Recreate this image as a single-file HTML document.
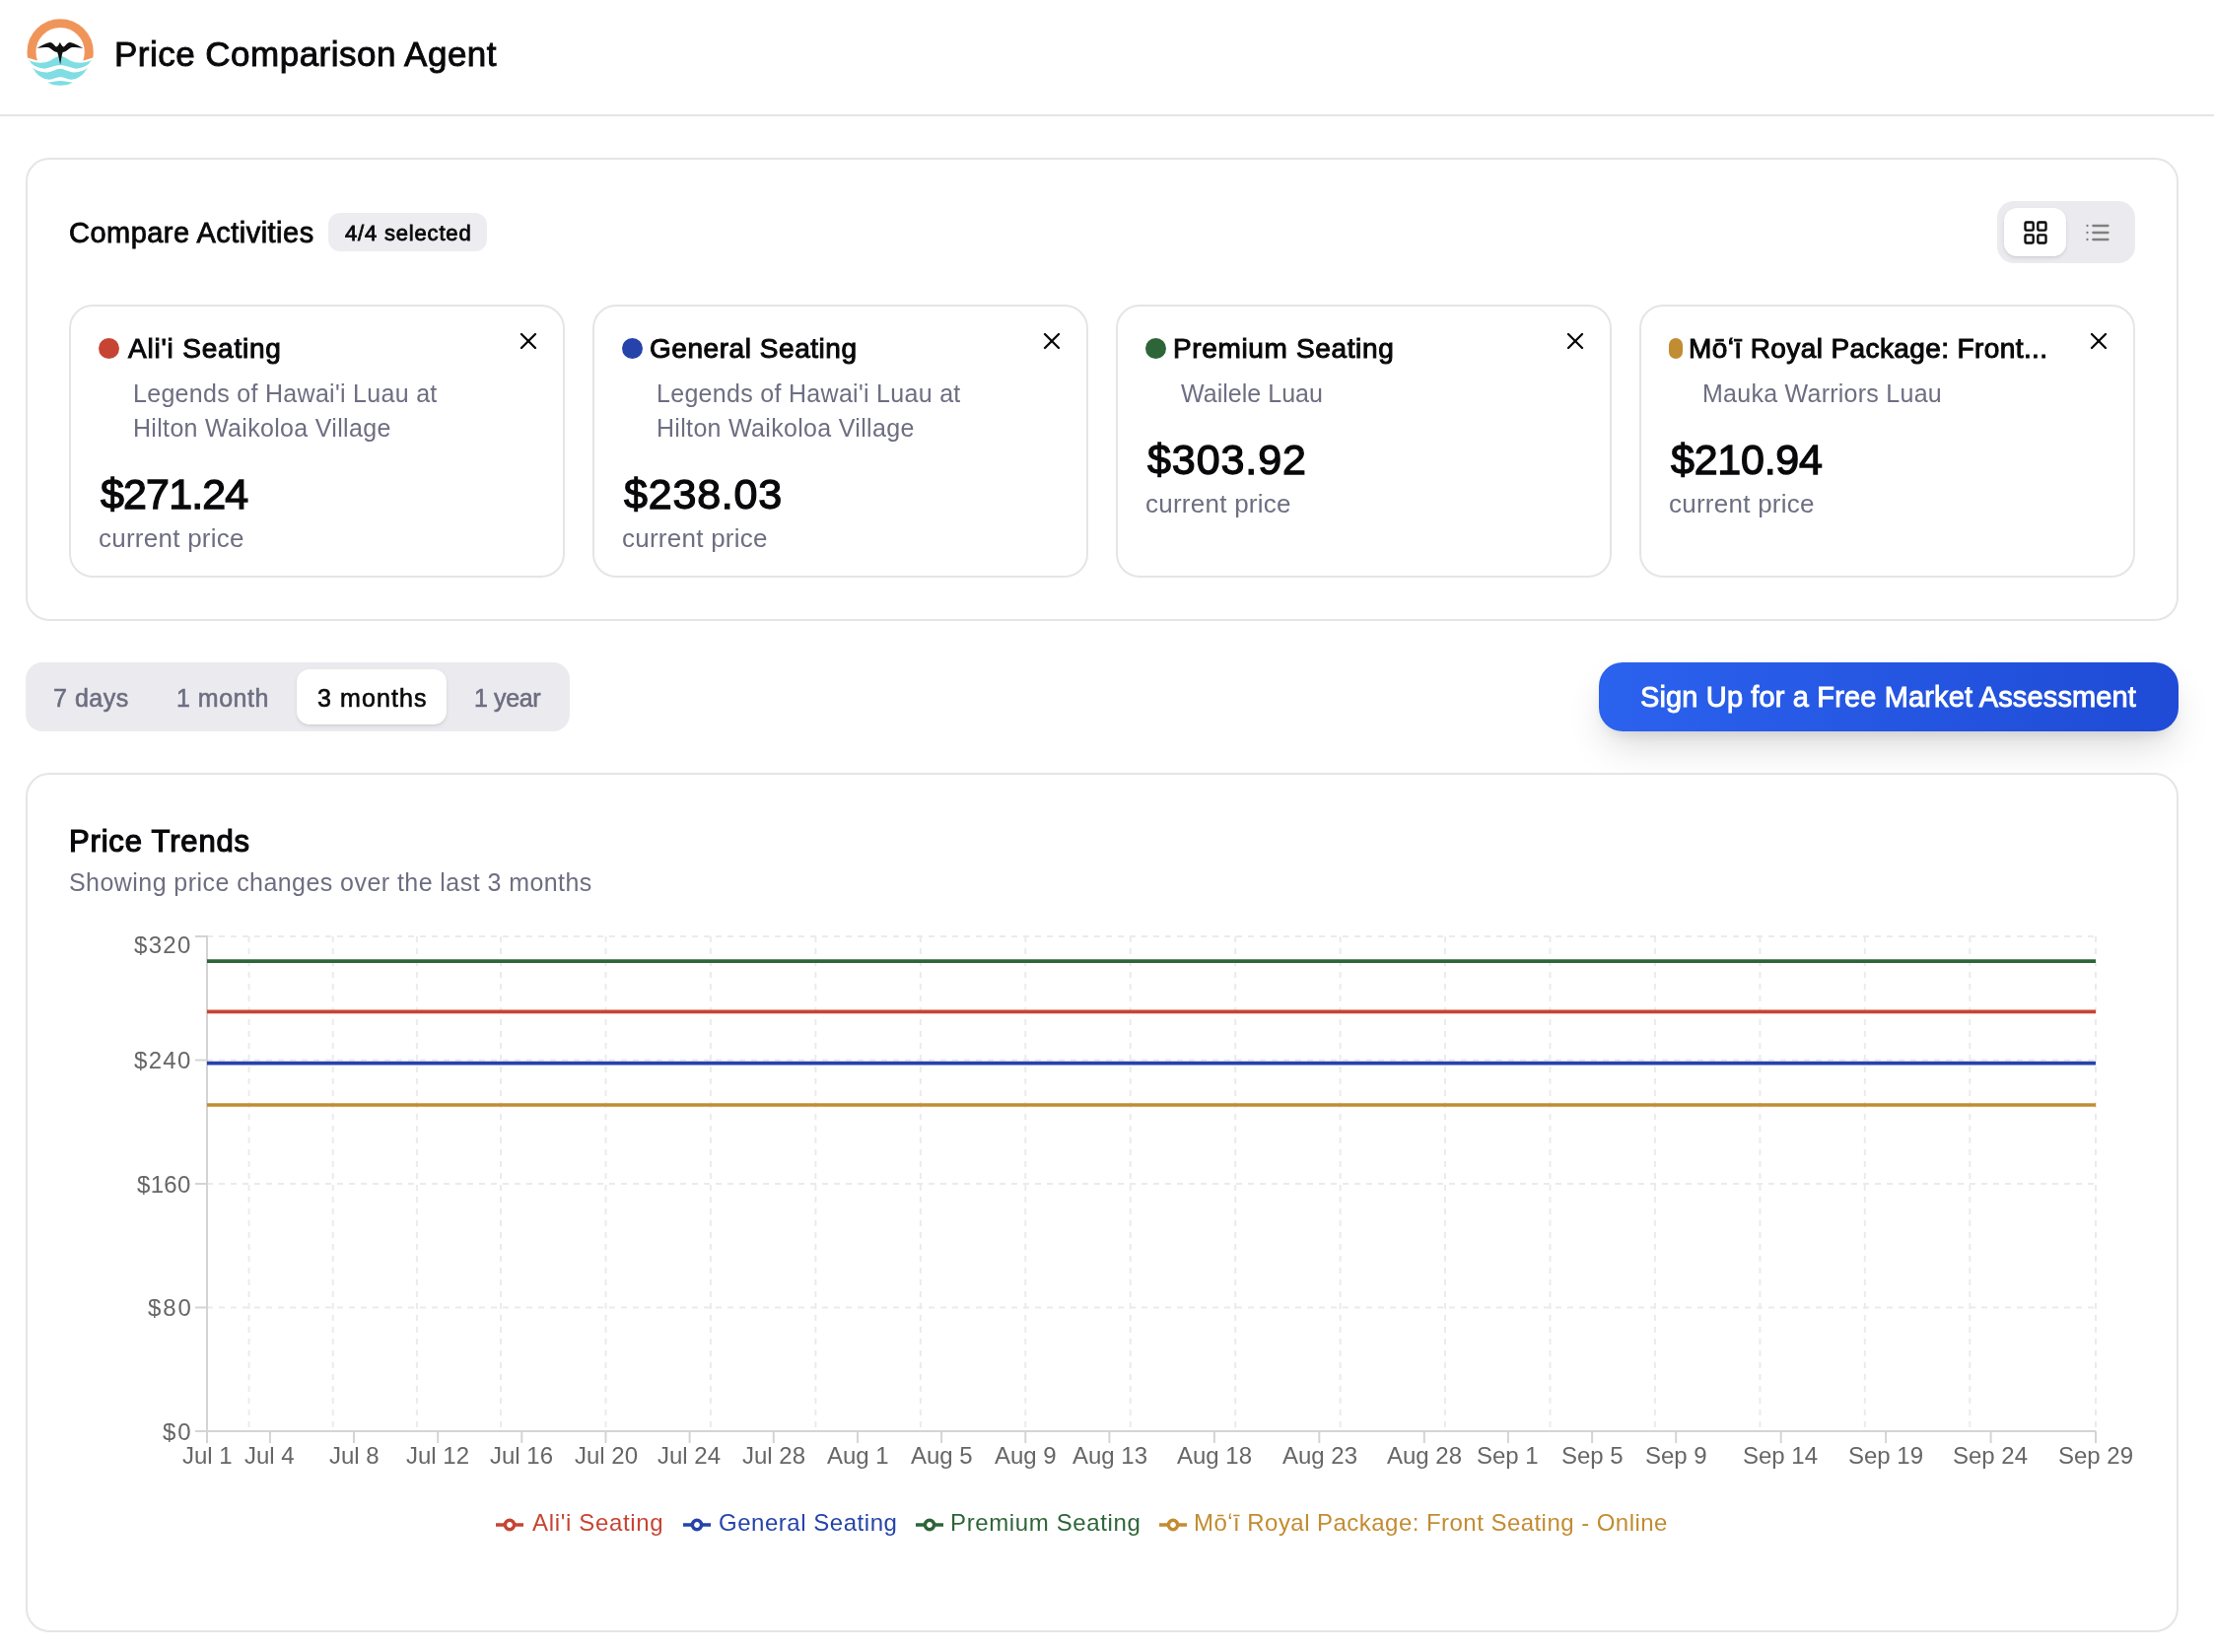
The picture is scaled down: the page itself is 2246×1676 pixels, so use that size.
<!DOCTYPE html>
<html><head><meta charset="utf-8"><title>Price Comparison Agent</title>
<style>
html,body{margin:0;padding:0;background:#ffffff;width:2246px;height:1676px;overflow:hidden;position:relative}
.abs{position:absolute}
.card{box-sizing:border-box;border:2px solid #e5e5e5;border-radius:24px;background:#ffffff}
.t{position:absolute;font-family:"Liberation Sans",sans-serif;line-height:1;white-space:pre;will-change:transform}
</style></head><body>
<svg class=abs style="left:20px;top:10px" width="90" height="90" viewBox="0 0 1652 1652">
<defs><clipPath id="rc"><polygon points="0,0 1652,0 1652,802 1170,950 330,945 0,850"/></clipPath></defs>
<circle clip-path="url(#rc)" cx="755" cy="785" r="535" fill="none" stroke="#f0955a" stroke-width="165"/>
<path fill="#7fdde3" d="M170,935 C300,1000 450,1000 560,950 C650,905 700,860 755,860 C810,860 860,905 950,950 C1060,1000 1210,1000 1340,935 Q1250,1080 1050,1095 C950,1085 850,1030 755,1030 C660,1030 560,1085 460,1095 Q260,1080 170,935 Z"/>
<path fill="#7fdde3" d="M240,1075 Q330,1160 500,1165 C600,1160 680,1095 755,1095 C830,1095 910,1160 1010,1165 Q1180,1160 1265,1075 Q1150,1290 960,1300 C880,1295 820,1250 755,1250 C690,1250 630,1295 550,1300 Q350,1290 240,1075 Z"/>
<path fill="#7fdde3" d="M520,1355 C600,1340 680,1320 755,1320 C830,1320 910,1340 990,1355 C900,1400 830,1410 755,1410 C680,1410 610,1400 520,1355 Z"/>
<path fill="#111" d="M320,715 C420,660 500,610 560,605 C610,600 640,660 680,690 C710,680 735,640 750,600 C765,640 790,680 820,690 C860,660 890,600 940,605 C1000,610 1080,660 1180,715 C1080,700 1000,695 960,700 C900,720 870,780 800,790 C780,850 770,950 755,1020 C740,950 725,850 700,790 C630,780 600,720 540,700 C500,695 420,700 320,715 Z"/>
</svg><div class=abs style='left:0;top:116px;width:2246px;height:2px;background:#e5e5e7'></div><div class='abs card' style='left:26px;top:160px;width:2184px;height:470px'></div><div class=abs style='left:333px;top:216px;width:161px;height:39px;border-radius:12px;background:#ededf1'></div><div class=abs style='left:2026px;top:204px;width:140px;height:63px;border-radius:17px;background:#ebebef'></div><div class=abs style='left:2033px;top:211px;width:63px;height:49px;border-radius:13px;background:#fff;box-shadow:0 2px 4px rgba(0,0,0,0.08),0 1px 2px rgba(0,0,0,0.06)'></div><svg class=abs style='left:2051px;top:222px' width='28' height='28' viewBox='0 0 24 24' fill='none' stroke='#09090b' stroke-width='2' stroke-linecap='round' stroke-linejoin='round'><rect width='7' height='7' x='3' y='3' rx='1'/><rect width='7' height='7' x='14' y='3' rx='1'/><rect width='7' height='7' x='14' y='14' rx='1'/><rect width='7' height='7' x='3' y='14' rx='1'/></svg><svg class=abs style='left:2113.5px;top:222px' width='28' height='28' viewBox='0 0 24 24' fill='none' stroke=GRAY stroke-width='2' stroke-linecap='round' stroke-linejoin='round'><path d='M3 12h.01'/><path d='M3 18h.01'/><path d='M3 6h.01'/><path d='M8 12h13'/><path d='M8 18h13'/><path d='M8 6h13'/></svg><div class='abs card' style='left:70px;top:309px;width:503px;height:277px'></div><div class=abs style='left:100px;top:343px;width:21px;height:21px;border-radius:50%;background:#c74432'></div><svg class=abs style='left:522px;top:332px' width='28' height='28' viewBox='0 0 24 24' fill='none' stroke='#09090b' stroke-width='2' stroke-linecap='round' stroke-linejoin='round'><path d='M18 6 6 18'/><path d='m6 6 12 12'/></svg><div class='abs card' style='left:601px;top:309px;width:503px;height:277px'></div><div class=abs style='left:631px;top:343px;width:21px;height:21px;border-radius:50%;background:#2543aa'></div><svg class=abs style='left:1053px;top:332px' width='28' height='28' viewBox='0 0 24 24' fill='none' stroke='#09090b' stroke-width='2' stroke-linecap='round' stroke-linejoin='round'><path d='M18 6 6 18'/><path d='m6 6 12 12'/></svg><div class='abs card' style='left:1132px;top:309px;width:503px;height:277px'></div><div class=abs style='left:1162px;top:343px;width:21px;height:21px;border-radius:50%;background:#2d6539'></div><svg class=abs style='left:1584px;top:332px' width='28' height='28' viewBox='0 0 24 24' fill='none' stroke='#09090b' stroke-width='2' stroke-linecap='round' stroke-linejoin='round'><path d='M18 6 6 18'/><path d='m6 6 12 12'/></svg><div class='abs card' style='left:1663px;top:309px;width:503px;height:277px'></div><div class=abs style='left:1693px;top:343px;width:14px;height:21px;border-radius:7px;background:#c28c32'></div><svg class=abs style='left:2115px;top:332px' width='28' height='28' viewBox='0 0 24 24' fill='none' stroke='#09090b' stroke-width='2' stroke-linecap='round' stroke-linejoin='round'><path d='M18 6 6 18'/><path d='m6 6 12 12'/></svg><div class=abs style='left:26px;top:672px;width:552px;height:70px;border-radius:17px;background:#ebebef'></div><div class=abs style='left:301px;top:679px;width:152px;height:56px;border-radius:13px;background:#fff;box-shadow:0 2px 4px rgba(0,0,0,0.08),0 1px 2px rgba(0,0,0,0.06)'></div><div class=abs style='left:1622px;top:672px;width:588px;height:70px;border-radius:24px;background:linear-gradient(to right,#2b62ee,#1f4bd6);box-shadow:0 20px 40px -8px rgba(0,0,0,0.16),0 8px 16px -8px rgba(0,0,0,0.12)'></div><div class='abs card' style='left:26px;top:784px;width:2184px;height:872px'></div><svg class=abs style='left:0;top:0' width='2246' height='1676'><line x1='210' y1='950.0' x2='2126' y2='950.0' stroke='#ebebeb' stroke-width='2' stroke-dasharray='6 6'/><line x1='210' y1='1075.5' x2='2126' y2='1075.5' stroke='#ebebeb' stroke-width='2' stroke-dasharray='6 6'/><line x1='210' y1='1201.0' x2='2126' y2='1201.0' stroke='#ebebeb' stroke-width='2' stroke-dasharray='6 6'/><line x1='210' y1='1326.5' x2='2126' y2='1326.5' stroke='#ebebeb' stroke-width='2' stroke-dasharray='6 6'/><line x1='252.6' y1='950' x2='252.6' y2='1452' stroke='#ebebeb' stroke-width='2' stroke-dasharray='6 6'/><line x1='337.7' y1='950' x2='337.7' y2='1452' stroke='#ebebeb' stroke-width='2' stroke-dasharray='6 6'/><line x1='422.9' y1='950' x2='422.9' y2='1452' stroke='#ebebeb' stroke-width='2' stroke-dasharray='6 6'/><line x1='508.0' y1='950' x2='508.0' y2='1452' stroke='#ebebeb' stroke-width='2' stroke-dasharray='6 6'/><line x1='614.5' y1='950' x2='614.5' y2='1452' stroke='#ebebeb' stroke-width='2' stroke-dasharray='6 6'/><line x1='720.9' y1='950' x2='720.9' y2='1452' stroke='#ebebeb' stroke-width='2' stroke-dasharray='6 6'/><line x1='827.4' y1='950' x2='827.4' y2='1452' stroke='#ebebeb' stroke-width='2' stroke-dasharray='6 6'/><line x1='933.8' y1='950' x2='933.8' y2='1452' stroke='#ebebeb' stroke-width='2' stroke-dasharray='6 6'/><line x1='1040.3' y1='950' x2='1040.3' y2='1452' stroke='#ebebeb' stroke-width='2' stroke-dasharray='6 6'/><line x1='1146.7' y1='950' x2='1146.7' y2='1452' stroke='#ebebeb' stroke-width='2' stroke-dasharray='6 6'/><line x1='1253.2' y1='950' x2='1253.2' y2='1452' stroke='#ebebeb' stroke-width='2' stroke-dasharray='6 6'/><line x1='1359.6' y1='950' x2='1359.6' y2='1452' stroke='#ebebeb' stroke-width='2' stroke-dasharray='6 6'/><line x1='1466.0' y1='950' x2='1466.0' y2='1452' stroke='#ebebeb' stroke-width='2' stroke-dasharray='6 6'/><line x1='1572.5' y1='950' x2='1572.5' y2='1452' stroke='#ebebeb' stroke-width='2' stroke-dasharray='6 6'/><line x1='1678.9' y1='950' x2='1678.9' y2='1452' stroke='#ebebeb' stroke-width='2' stroke-dasharray='6 6'/><line x1='1785.4' y1='950' x2='1785.4' y2='1452' stroke='#ebebeb' stroke-width='2' stroke-dasharray='6 6'/><line x1='1891.8' y1='950' x2='1891.8' y2='1452' stroke='#ebebeb' stroke-width='2' stroke-dasharray='6 6'/><line x1='1998.3' y1='950' x2='1998.3' y2='1452' stroke='#ebebeb' stroke-width='2' stroke-dasharray='6 6'/><line x1='2126.0' y1='950' x2='2126.0' y2='1452' stroke='#ebebeb' stroke-width='2' stroke-dasharray='6 6'/><line x1='210' y1='949' x2='210' y2='1453' stroke='#d4d4d4' stroke-width='2'/><line x1='209' y1='1452' x2='2126' y2='1452' stroke='#d4d4d4' stroke-width='2'/><line x1='198' y1='950.0' x2='210' y2='950.0' stroke='#d4d4d4' stroke-width='2'/><line x1='198' y1='1075.5' x2='210' y2='1075.5' stroke='#d4d4d4' stroke-width='2'/><line x1='198' y1='1201.0' x2='210' y2='1201.0' stroke='#d4d4d4' stroke-width='2'/><line x1='198' y1='1326.5' x2='210' y2='1326.5' stroke='#d4d4d4' stroke-width='2'/><line x1='198' y1='1452.0' x2='210' y2='1452.0' stroke='#d4d4d4' stroke-width='2'/><line x1='210.0' y1='1452' x2='210.0' y2='1464' stroke='#d4d4d4' stroke-width='2'/><line x1='273.9' y1='1452' x2='273.9' y2='1464' stroke='#d4d4d4' stroke-width='2'/><line x1='359.0' y1='1452' x2='359.0' y2='1464' stroke='#d4d4d4' stroke-width='2'/><line x1='444.2' y1='1452' x2='444.2' y2='1464' stroke='#d4d4d4' stroke-width='2'/><line x1='529.3' y1='1452' x2='529.3' y2='1464' stroke='#d4d4d4' stroke-width='2'/><line x1='614.5' y1='1452' x2='614.5' y2='1464' stroke='#d4d4d4' stroke-width='2'/><line x1='699.6' y1='1452' x2='699.6' y2='1464' stroke='#d4d4d4' stroke-width='2'/><line x1='784.8' y1='1452' x2='784.8' y2='1464' stroke='#d4d4d4' stroke-width='2'/><line x1='870.0' y1='1452' x2='870.0' y2='1464' stroke='#d4d4d4' stroke-width='2'/><line x1='955.1' y1='1452' x2='955.1' y2='1464' stroke='#d4d4d4' stroke-width='2'/><line x1='1040.3' y1='1452' x2='1040.3' y2='1464' stroke='#d4d4d4' stroke-width='2'/><line x1='1125.4' y1='1452' x2='1125.4' y2='1464' stroke='#d4d4d4' stroke-width='2'/><line x1='1231.9' y1='1452' x2='1231.9' y2='1464' stroke='#d4d4d4' stroke-width='2'/><line x1='1338.3' y1='1452' x2='1338.3' y2='1464' stroke='#d4d4d4' stroke-width='2'/><line x1='1444.8' y1='1452' x2='1444.8' y2='1464' stroke='#d4d4d4' stroke-width='2'/><line x1='1529.9' y1='1452' x2='1529.9' y2='1464' stroke='#d4d4d4' stroke-width='2'/><line x1='1615.1' y1='1452' x2='1615.1' y2='1464' stroke='#d4d4d4' stroke-width='2'/><line x1='1700.2' y1='1452' x2='1700.2' y2='1464' stroke='#d4d4d4' stroke-width='2'/><line x1='1806.7' y1='1452' x2='1806.7' y2='1464' stroke='#d4d4d4' stroke-width='2'/><line x1='1913.1' y1='1452' x2='1913.1' y2='1464' stroke='#d4d4d4' stroke-width='2'/><line x1='2019.6' y1='1452' x2='2019.6' y2='1464' stroke='#d4d4d4' stroke-width='2'/><line x1='2126.0' y1='1452' x2='2126.0' y2='1464' stroke='#d4d4d4' stroke-width='2'/><line x1='210' y1='975.1' x2='2126' y2='975.1' stroke='#2d6539' stroke-width='3.6'/><line x1='210' y1='1026.4' x2='2126' y2='1026.4' stroke='#c74432' stroke-width='3.6'/><line x1='210' y1='1078.6' x2='2126' y2='1078.6' stroke='#2543aa' stroke-width='3.6'/><line x1='210' y1='1121.0' x2='2126' y2='1121.0' stroke='#c28c32' stroke-width='3.6'/><path transform='translate(503,1533)' fill='none' stroke='#c74432' stroke-width='3.5' d='M0,14h9.33A4.67,4.67,0,1,1,18.67,14H28M18.67,14A4.67,4.67,0,1,1,9.33,14'/><path transform='translate(693,1533)' fill='none' stroke='#2543aa' stroke-width='3.5' d='M0,14h9.33A4.67,4.67,0,1,1,18.67,14H28M18.67,14A4.67,4.67,0,1,1,9.33,14'/><path transform='translate(929,1533)' fill='none' stroke='#2d6539' stroke-width='3.5' d='M0,14h9.33A4.67,4.67,0,1,1,18.67,14H28M18.67,14A4.67,4.67,0,1,1,9.33,14'/><path transform='translate(1176,1533)' fill='none' stroke='#c28c32' stroke-width='3.5' d='M0,14h9.33A4.67,4.67,0,1,1,18.67,14H28M18.67,14A4.67,4.67,0,1,1,9.33,14'/></svg>
<div class=t style="left:116.0px;top:37.0px;font-size:35px;font-weight:normal;color:#09090b;letter-spacing:0.48px;-webkit-text-stroke:0.9px #09090b">Price Comparison Agent</div><div class=t style="left:70.0px;top:222.0px;font-size:29px;font-weight:normal;color:#09090b;letter-spacing:0.47px;-webkit-text-stroke:0.8px #09090b">Compare Activities</div><div class=t style="left:350.0px;top:226.0px;font-size:22px;font-weight:normal;color:#09090b;letter-spacing:0.82px;-webkit-text-stroke:0.8px #09090b">4/4 selected</div><div class=t style="left:129.5px;top:339.6px;font-size:28px;font-weight:normal;color:#09090b;letter-spacing:0.79px;-webkit-text-stroke:1.0px #09090b">Ali'i Seating</div><div class=t style="left:659.3px;top:339.6px;font-size:28px;font-weight:normal;color:#09090b;letter-spacing:0.55px;-webkit-text-stroke:1.0px #09090b">General Seating</div><div class=t style="left:1190.0px;top:339.6px;font-size:28px;font-weight:normal;color:#09090b;letter-spacing:0.64px;-webkit-text-stroke:1.0px #09090b">Premium Seating</div><div class=t style="left:1713.4px;top:339.6px;font-size:28px;font-weight:normal;color:#09090b;letter-spacing:0.4px;-webkit-text-stroke:1.0px #09090b">M&#333;&#699;&#299; Royal Package: Front...</div><div class=t style="left:134.5px;top:387.0px;font-size:25px;font-weight:normal;color:#6e6e82;letter-spacing:0.3px;-webkit-text-stroke:0px #6e6e82">Legends of Hawai'i Luau at</div><div class=t style="left:134.8px;top:422.2px;font-size:25px;font-weight:normal;color:#6e6e82;letter-spacing:0.32px;-webkit-text-stroke:0px #6e6e82">Hilton Waikoloa Village</div><div class=t style="left:665.5px;top:387.0px;font-size:25px;font-weight:normal;color:#6e6e82;letter-spacing:0.3px;-webkit-text-stroke:0px #6e6e82">Legends of Hawai'i Luau at</div><div class=t style="left:665.8px;top:422.2px;font-size:25px;font-weight:normal;color:#6e6e82;letter-spacing:0.32px;-webkit-text-stroke:0px #6e6e82">Hilton Waikoloa Village</div><div class=t style="left:1198.4px;top:386.8px;font-size:25px;font-weight:normal;color:#6e6e82;letter-spacing:0.03px;-webkit-text-stroke:0px #6e6e82">Wailele Luau</div><div class=t style="left:1727.4px;top:386.7px;font-size:25px;font-weight:normal;color:#6e6e82;letter-spacing:0.26px;-webkit-text-stroke:0px #6e6e82">Mauka Warriors Luau</div><div class=t style="left:102.0px;top:480.0px;font-size:43px;font-weight:normal;color:#09090b;letter-spacing:-0.87px;-webkit-text-stroke:1.3px #09090b">$271.24</div><div class=t style="left:633.4px;top:480.0px;font-size:43px;font-weight:normal;color:#09090b;letter-spacing:0.8px;-webkit-text-stroke:1.3px #09090b">$238.03</div><div class=t style="left:1163.9px;top:445.2px;font-size:43px;font-weight:normal;color:#09090b;letter-spacing:0.92px;-webkit-text-stroke:1.3px #09090b">$303.92</div><div class=t style="left:1695.2px;top:445.2px;font-size:43px;font-weight:normal;color:#09090b;letter-spacing:-0.25px;-webkit-text-stroke:1.3px #09090b">$210.94</div><div class=t style="left:100.0px;top:532.8px;font-size:26px;font-weight:normal;color:#6e6e82;letter-spacing:0.25px;-webkit-text-stroke:0px #6e6e82">current price</div><div class=t style="left:631.0px;top:532.8px;font-size:26px;font-weight:normal;color:#6e6e82;letter-spacing:0.25px;-webkit-text-stroke:0px #6e6e82">current price</div><div class=t style="left:1162.0px;top:497.7px;font-size:26px;font-weight:normal;color:#6e6e82;letter-spacing:0.25px;-webkit-text-stroke:0px #6e6e82">current price</div><div class=t style="left:1693.4px;top:497.7px;font-size:26px;font-weight:normal;color:#6e6e82;letter-spacing:0.25px;-webkit-text-stroke:0px #6e6e82">current price</div><div class=t style="left:53.8px;top:696.2px;font-size:25px;font-weight:normal;color:#6e6e82;letter-spacing:0.52px;-webkit-text-stroke:0.6px #6e6e82">7 days</div><div class=t style="left:179.0px;top:696.2px;font-size:25px;font-weight:normal;color:#6e6e82;letter-spacing:0.5px;-webkit-text-stroke:0.6px #6e6e82">1 month</div><div class=t style="left:321.8px;top:696.2px;font-size:25px;font-weight:normal;color:#09090b;letter-spacing:1.11px;-webkit-text-stroke:0.6px #09090b">3 months</div><div class=t style="left:481.4px;top:696.2px;font-size:25px;font-weight:normal;color:#6e6e82;letter-spacing:-0.38px;-webkit-text-stroke:0.6px #6e6e82">1 year</div><div class=t style="left:1664.0px;top:692.8px;font-size:29px;font-weight:normal;color:#ffffff;letter-spacing:0.14px;-webkit-text-stroke:0.9px #ffffff">Sign Up for a Free Market Assessment</div><div class=t style="left:70.0px;top:838.0px;font-size:31px;font-weight:normal;color:#09090b;letter-spacing:0.82px;-webkit-text-stroke:1.2px #09090b">Price Trends</div><div class=t style="left:70.0px;top:883.2px;font-size:25px;font-weight:normal;color:#6e6e82;letter-spacing:0.44px;-webkit-text-stroke:0px #6e6e82">Showing price changes over the last 3 months</div><div class=t style="left:135.7px;top:947.4px;font-size:24px;font-weight:normal;color:#666666;letter-spacing:1.33px;-webkit-text-stroke:0px #666666">$320</div><div class=t style="left:135.7px;top:1064.0px;font-size:24px;font-weight:normal;color:#666666;letter-spacing:1.33px;-webkit-text-stroke:0px #666666">$240</div><div class=t style="left:138.7px;top:1190.3px;font-size:24px;font-weight:normal;color:#666666;letter-spacing:0.33px;-webkit-text-stroke:0px #666666">$160</div><div class=t style="left:149.7px;top:1315.1px;font-size:24px;font-weight:normal;color:#666666;letter-spacing:1.9px;-webkit-text-stroke:0px #666666">$80</div><div class=t style="left:164.7px;top:1441.0px;font-size:24px;font-weight:normal;color:#666666;letter-spacing:1.8px;-webkit-text-stroke:0px #666666">$0</div><div class=t style="left:184.5px;top:1465.0px;font-size:24px;font-weight:normal;color:#666666;letter-spacing:0px;-webkit-text-stroke:0px #666666">Jul 1</div><div class=t style="left:248.4px;top:1465.0px;font-size:24px;font-weight:normal;color:#666666;letter-spacing:0px;-webkit-text-stroke:0px #666666">Jul 4</div><div class=t style="left:333.5px;top:1465.0px;font-size:24px;font-weight:normal;color:#666666;letter-spacing:0px;-webkit-text-stroke:0px #666666">Jul 8</div><div class=t style="left:412.2px;top:1465.0px;font-size:24px;font-weight:normal;color:#666666;letter-spacing:0px;-webkit-text-stroke:0px #666666">Jul 12</div><div class=t style="left:497.3px;top:1465.0px;font-size:24px;font-weight:normal;color:#666666;letter-spacing:0px;-webkit-text-stroke:0px #666666">Jul 16</div><div class=t style="left:582.5px;top:1465.0px;font-size:24px;font-weight:normal;color:#666666;letter-spacing:0px;-webkit-text-stroke:0px #666666">Jul 20</div><div class=t style="left:667.1px;top:1465.0px;font-size:24px;font-weight:normal;color:#666666;letter-spacing:0px;-webkit-text-stroke:0px #666666">Jul 24</div><div class=t style="left:752.8px;top:1465.0px;font-size:24px;font-weight:normal;color:#666666;letter-spacing:0px;-webkit-text-stroke:0px #666666">Jul 28</div><div class=t style="left:839.0px;top:1465.0px;font-size:24px;font-weight:normal;color:#666666;letter-spacing:0px;-webkit-text-stroke:0px #666666">Aug 1</div><div class=t style="left:924.1px;top:1465.0px;font-size:24px;font-weight:normal;color:#666666;letter-spacing:0px;-webkit-text-stroke:0px #666666">Aug 5</div><div class=t style="left:1009.3px;top:1465.0px;font-size:24px;font-weight:normal;color:#666666;letter-spacing:0px;-webkit-text-stroke:0px #666666">Aug 9</div><div class=t style="left:1087.9px;top:1465.0px;font-size:24px;font-weight:normal;color:#666666;letter-spacing:0px;-webkit-text-stroke:0px #666666">Aug 13</div><div class=t style="left:1194.4px;top:1465.0px;font-size:24px;font-weight:normal;color:#666666;letter-spacing:0px;-webkit-text-stroke:0px #666666">Aug 18</div><div class=t style="left:1300.8px;top:1465.0px;font-size:24px;font-weight:normal;color:#666666;letter-spacing:0px;-webkit-text-stroke:0px #666666">Aug 23</div><div class=t style="left:1407.3px;top:1465.0px;font-size:24px;font-weight:normal;color:#666666;letter-spacing:0px;-webkit-text-stroke:0px #666666">Aug 28</div><div class=t style="left:1498.4px;top:1465.0px;font-size:24px;font-weight:normal;color:#666666;letter-spacing:0px;-webkit-text-stroke:0px #666666">Sep 1</div><div class=t style="left:1583.6px;top:1465.0px;font-size:24px;font-weight:normal;color:#666666;letter-spacing:0px;-webkit-text-stroke:0px #666666">Sep 5</div><div class=t style="left:1668.7px;top:1465.0px;font-size:24px;font-weight:normal;color:#666666;letter-spacing:0px;-webkit-text-stroke:0px #666666">Sep 9</div><div class=t style="left:1768.2px;top:1465.0px;font-size:24px;font-weight:normal;color:#666666;letter-spacing:0px;-webkit-text-stroke:0px #666666">Sep 14</div><div class=t style="left:1875.1px;top:1465.0px;font-size:24px;font-weight:normal;color:#666666;letter-spacing:0px;-webkit-text-stroke:0px #666666">Sep 19</div><div class=t style="left:1981.1px;top:1465.0px;font-size:24px;font-weight:normal;color:#666666;letter-spacing:0px;-webkit-text-stroke:0px #666666">Sep 24</div><div class=t style="left:2088.0px;top:1465.0px;font-size:24px;font-weight:normal;color:#666666;letter-spacing:0px;-webkit-text-stroke:0px #666666">Sep 29</div><div class=t style="left:540.2px;top:1533.1px;font-size:24px;font-weight:normal;color:#c74432;letter-spacing:0.67px;-webkit-text-stroke:0px #c74432">Ali'i Seating</div><div class=t style="left:728.6px;top:1533.1px;font-size:24px;font-weight:normal;color:#2543aa;letter-spacing:0.53px;-webkit-text-stroke:0px #2543aa">General Seating</div><div class=t style="left:963.8px;top:1533.1px;font-size:24px;font-weight:normal;color:#2d6539;letter-spacing:0.62px;-webkit-text-stroke:0px #2d6539">Premium Seating</div><div class=t style="left:1211.2px;top:1533.1px;font-size:24px;font-weight:normal;color:#c28c32;letter-spacing:0.46px;-webkit-text-stroke:0px #c28c32">M&#333;&#699;&#299; Royal Package: Front Seating - Online</div>
</body></html>
